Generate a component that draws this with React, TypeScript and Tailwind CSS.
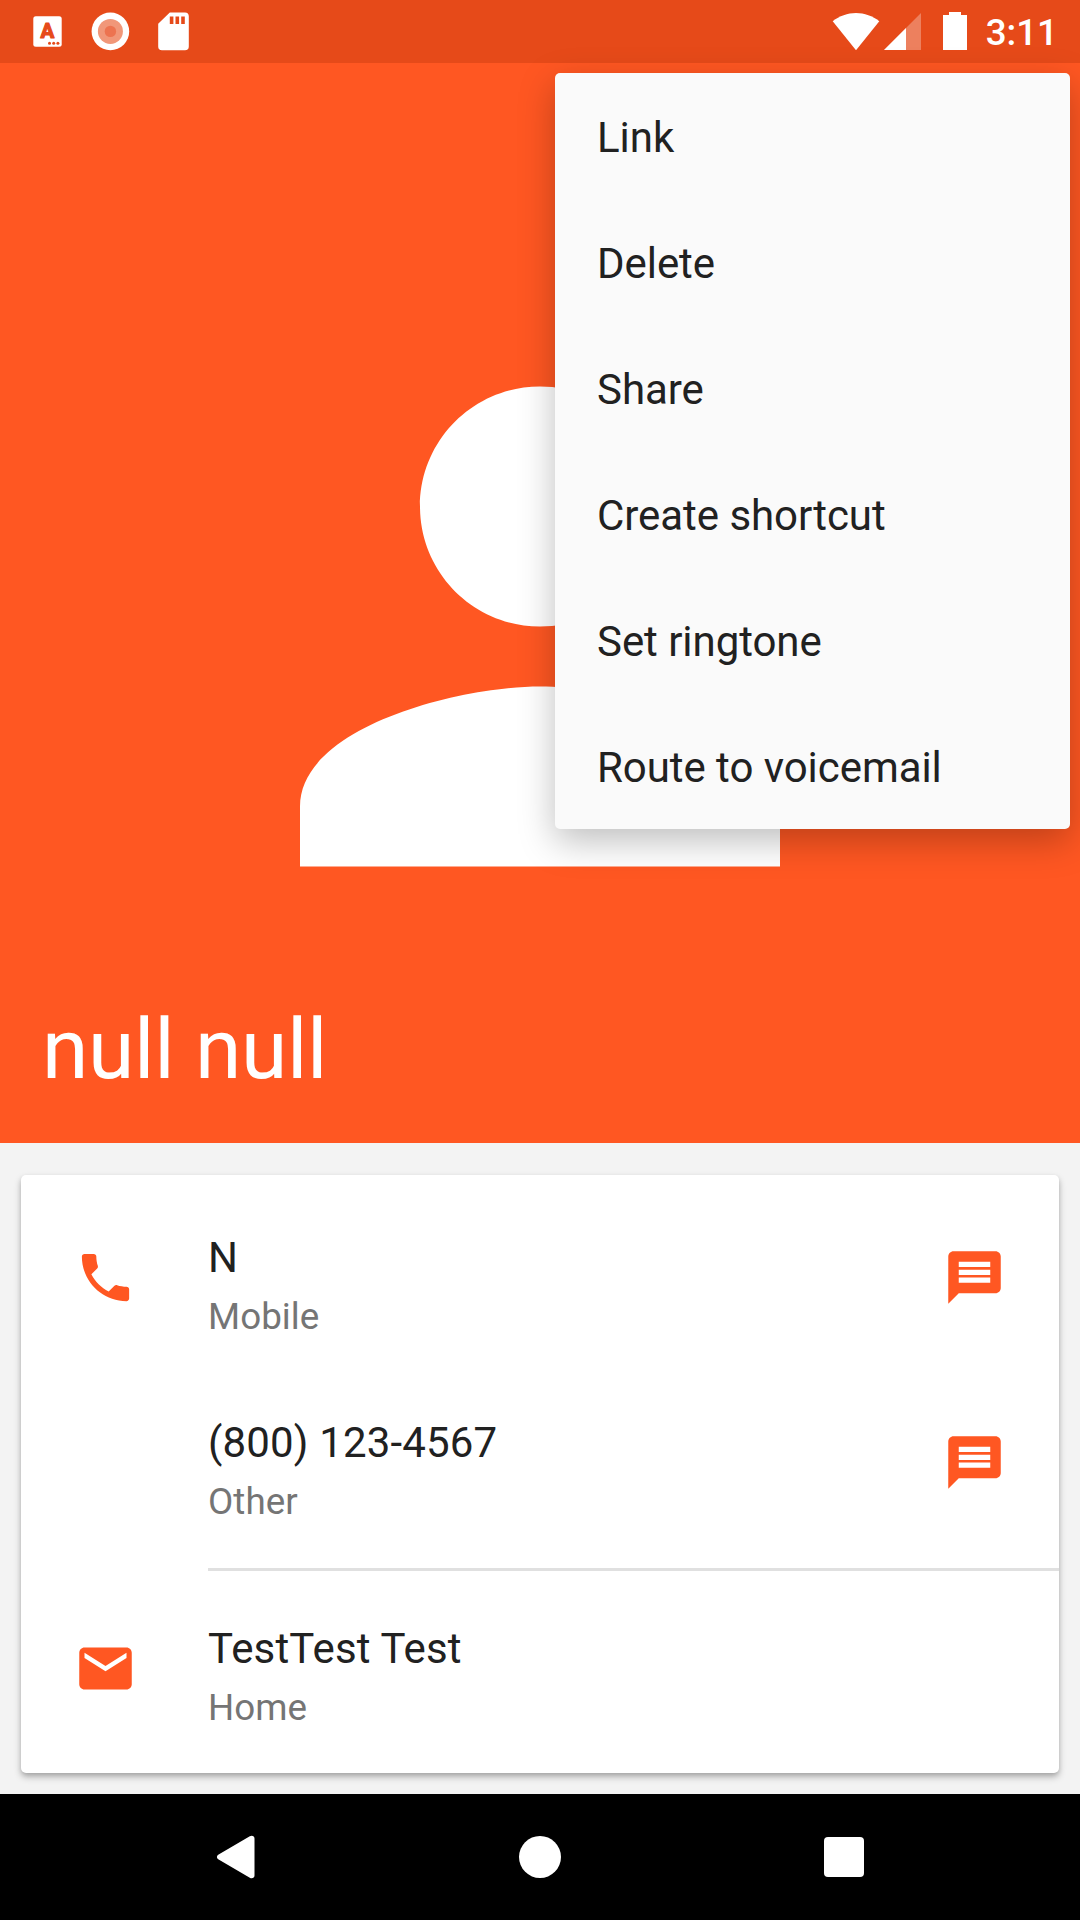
import type { ReactNode } from "react";

const menuItems = [
  "Link",
  "Delete",
  "Share",
  "Create shortcut",
  "Set ringtone",
  "Route to voicemail",
];

function StatusBar() {
  return (
    <div className="flex h-[63px] w-full shrink-0 items-start justify-between bg-[#e64a19]">
      <svg className="ml-[30px] h-[63px] w-[170px]" viewBox="30 0 170 63" fill="none">
        <rect x="33.3" y="16.2" width="28.4" height="30.6" rx="2.5" fill="#fff" />
        <text
          x="47.3"
          y="38.3"
          textAnchor="middle"
          fontFamily="Roboto"
          fontWeight="700"
          fontSize="20.5"
          fill="#e64a19"
          stroke="#e64a19"
          strokeWidth="1.2"
          strokeLinejoin="round"
        >
          A
        </text>
        <circle cx="49.5" cy="43.2" r="1.5" fill="#e64a19" />
        <circle cx="53.7" cy="43.2" r="1.5" fill="#e64a19" />
        <circle cx="57.9" cy="43.2" r="1.5" fill="#e64a19" />
        <circle cx="110.4" cy="31.4" r="18.8" fill="#fff" />
        <circle cx="110.4" cy="31.4" r="12.5" fill="#f19779" />
        <circle cx="110.4" cy="31.4" r="5.7" fill="#ed7350" />
        <path
          d="M169.8 12.4H185a3.8 3.8 0 0 1 3.8 3.8v30.2a3.8 3.8 0 0 1-3.8 3.8h-23a3.8 3.8 0 0 1-3.8-3.8V23.800z"
          fill="#fff"
        />
        <path d="M169.8 16.4h3.6V24h-3.6zM175.5 16.4h3.6V24h-3.6zM181.2 16.4h3.6V24h-3.6z" fill="#e64a19" />
      </svg>
      <div className="flex">
        <svg className="h-[63px] w-[140px]" viewBox="830 0 140 63" fill="#fff">
          <path d="M856 50.3 832.7 21.2C839.5 16 847.5 13 856 13s16.500 3 23.300 8.200z" />
          <path d="M921 13v37h-37z" fillOpacity=".3" />
          <path d="M906 28v22h-22z" />
          <path d="M943 15h6v-3h12v3h6v35h-24z" />
        </svg>
        <div className="mr-[22px] pl-[16px] pt-[8px] text-[36.75px] font-medium leading-[50px] text-white">
          3:11
        </div>
      </div>
    </div>
  );
}

function PhoneIcon() {
  return (
    <svg className="size-[63px]" viewBox="0 0 24 24" fill="#ff5722">
      <path d="M6.620 10.790c1.440 2.830 3.760 5.140 6.590 6.590l2.200-2.200c.27-.27.67-.36 1.020-.24 1.120.37 2.330.57 3.570.57.55 0 1 .45 1 1V20c0 .55-.45 1-1 1-9.390 0-17-7.610-17-17 0-.55.45-1 1-1h3.500c.55 0 1 .45 1 1 0 1.250.2 2.450.57 3.570.11.35.03.74-.25 1.020l-2.200 2.200z" />
    </svg>
  );
}

function MailIcon() {
  return (
    <svg className="size-[63px]" viewBox="0 0 24 24" fill="#ff5722">
      <path d="M20 4H4c-1.100 0-1.990.9-1.990 2L2 18c0 1.100.9 2 2 2h16c1.100 0 2-.9 2-2V6c0-1.100-.9-2-2-2zm0 4l-8 5-8-5V6l8 5 8-5v2z" />
    </svg>
  );
}

function MessageIcon() {
  return (
    <svg className="size-[63px]" viewBox="0 0 24 24" fill="#ff5722">
      <path d="M20 2H4c-1.100 0-1.990.9-1.990 2L2 22l4-4h14c1.100 0 2-.9 2-2V4c0-1.100-.9-2-2-2zM6 9h12v2H6V9zm12 5H6v-2h12v2zm0-6H6V6h12v2z" />
    </svg>
  );
}

function Row({
  icon,
  title,
  label,
  action,
}: {
  icon?: ReactNode;
  title: string;
  label: string;
  action?: ReactNode;
}) {
  return (
    <div className="flex h-[185px] shrink-0">
      <div className="ml-[52.5px] w-[134.5px] pt-[48px]">{icon}</div>
      <div className="flex-1 pt-[35px]">
        <div className="text-[42px] leading-[50px] tracking-[0.15px] text-[#212121]">{title}</div>
        <div className="mt-[12px] text-[36.75px] leading-[44px] tracking-[0.05px] text-[#757575]">{label}</div>
      </div>
      <div className="mr-[53px] pt-[48px]">{action}</div>
    </div>
  );
}

export default function App() {
  return (
    <div className="relative flex h-[1920px] w-[1080px] flex-col overflow-hidden bg-[#f3f3f3] font-[Roboto,sans-serif]">
      <StatusBar />
      <header className="flex h-[1080px] shrink-0 flex-col items-center bg-[#ff5722] pt-[204px]">
        <svg className="size-[720px] shrink-0" viewBox="0 0.017 24 24" fill="#fff">
          <path d="M12 12c2.210 0 4-1.790 4-4s-1.790-4-4-4-4 1.790-4 4 1.790 4 4 4zm0 2c-2.670 0-8 1.340-8 4v2h16v-2c0-2.660-5.330-4-8-4z" />
        </svg>
        <h1 className="mt-[14px] w-full pl-[42px] text-[84px] leading-[98px] tracking-[-0.3px] text-white">null null</h1>
      </header>

      <main className="flex flex-1 flex-col px-[21px] pt-[32px]">
        <section className="flex h-[598px] flex-col rounded-[5px] bg-white pt-[23px] shadow-[0_4px_7px_rgba(0,0,0,0.26),0_2px_4px_rgba(0,0,0,0.1)]">
          <Row icon={<PhoneIcon />} title="N" label="Mobile" action={<MessageIcon />} />
          <Row title="(800) 123-4567" label="Other" action={<MessageIcon />} />
          <div className="mb-[18px] ml-[187px] h-[3px] shrink-0 bg-[#e0e0e0]" />
          <Row icon={<MailIcon />} title="TestTest Test" label="Home" />
        </section>
      </main>

      <nav className="flex h-[126px] shrink-0 items-center bg-black">
        <svg className="ml-[214px] h-[48px] w-[44px]" viewBox="0 0 44 48" fill="#fff">
          <path d="M4.200 21.800 35.800 3.200C38 2 40.500 3 40.500 5.500v37c0 2.500-2.500 3.500-4.700 2.300L4.200 26.200c-1.700-1-1.700-3.400 0-4.400z" />
        </svg>
        <div className="ml-[261px] size-[42px] rounded-full bg-white" />
        <div className="ml-[263px] size-[40px] rounded-[4px] bg-white" />
      </nav>

      <ul className="absolute right-[10px] top-[73px] w-[515px] rounded-[5px] bg-[#fafafa] shadow-[0_12px_36px_rgba(0,0,0,0.26)]">
        {menuItems.map((item) => (
          <li
            key={item}
            className="flex h-[126px] items-center pl-[42px] pt-[4px] text-[42px] leading-[50px] tracking-[-0.05px] text-[#212121]"
          >
            {item}
          </li>
        ))}
      </ul>
    </div>
  );
}
